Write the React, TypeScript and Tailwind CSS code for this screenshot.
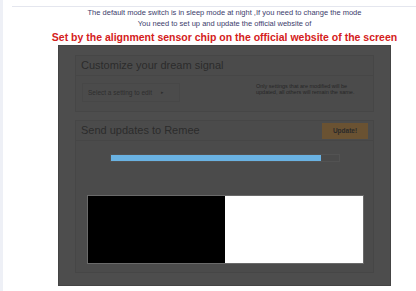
export default function App() {
  return (
    <div className="relative w-[416px] h-[291px] bg-white overflow-hidden font-['Liberation_Sans',Arial,sans-serif]">
      <div className="absolute left-0 top-0 bottom-0 w-[3px] bg-[#eef0f6]" />
      <div className="ml-[12px] mt-[6px] h-px bg-[#e4e6ee]" />
      <div className="pl-[33px] flex flex-col items-center">
        <p className="mt-[0px] text-[7.5px] leading-[11px] text-[#3c3c6c] whitespace-nowrap">
          The default mode switch is in sleep mode at night ,If you need to change the mode
        </p>
        <p className="text-[7.5px] leading-[11px] text-[#3c3c6c] whitespace-nowrap">
          You need to set up and update the official website of
        </p>
        <p className="mt-[1px] text-[10.5px] leading-[14px] font-bold text-[#d42020] whitespace-nowrap">
          Set by the alignment sensor chip on the official website of the screen
        </p>

        <div className="mt-[1px] w-[333px] h-[241px] bg-[#4d4d4d] border border-[#444] pl-[16px] pt-[9px] flex flex-col gap-[8px]">
          <div className="w-[299px] h-[57px] border border-[#464646] bg-[#4b4b4b] flex flex-col">
            <div className="h-[20px] border-b border-[#464646] px-[5px] flex items-center text-[11px] text-[#2c2c2c]">
              Customize your dream signal
            </div>
            <div className="flex items-start pl-[6px] pt-[7px]">
              <div className="w-[98px] h-[19px] border border-[#474747] flex items-center pl-[5px] text-[6.5px] text-[#2e2e2e]">
                <span>Select a setting to edit</span>
                <span className="ml-[9px] text-[5px]">▸</span>
              </div>
              <div className="ml-[76px] w-[110px] text-[5.5px] leading-[6px] text-[#262626]">
                Only settings that are modified will be updated, all others will remain the same.
              </div>
            </div>
          </div>

          <div className="w-[299px] h-[153px] border border-[#464646] bg-[#4b4b4b] flex flex-col">
            <div className="h-[20px] border-b border-[#464646] pl-[5px] pr-[5px] flex items-center justify-between">
              <span className="text-[11px] text-[#2c2c2c]">Send updates to Remee</span>
              <span className="w-[46px] h-[16px] bg-[#6a5232] flex items-center justify-center text-[6.5px] font-bold text-[#2a2a2a]">
                Update!
              </span>
            </div>
            <div className="mt-[13px] ml-[34px] w-[230px] h-[8px] border border-[#525252] bg-[#4a4a4a]">
              <div className="h-full w-[210px] bg-[#6ab2e2]" />
            </div>
            <div className="mt-[33px] ml-[11px] w-[277px] h-[69px] border border-[#6a6a6a] flex">
              <div className="w-[137px] h-full bg-black" />
              <div className="flex-1 h-full bg-white" />
            </div>
          </div>
        </div>
      </div>
    </div>
  );
}
